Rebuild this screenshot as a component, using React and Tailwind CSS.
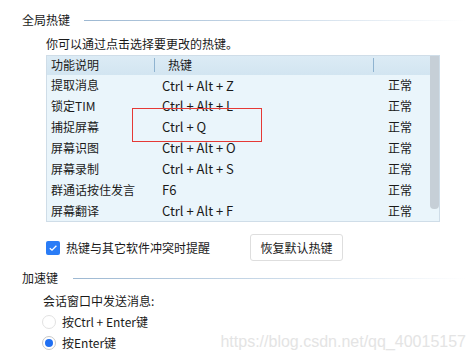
import React from "react";

const rows = [
  ["提取消息", "Ctrl + Alt + Z"],
  ["锁定TIM", "Ctrl + Alt + L"],
  ["捕捉屏幕", "Ctrl + Q"],
  ["屏幕识图", "Ctrl + Alt + O"],
  ["屏幕录制", "Ctrl + Alt + S"],
  ["群通话按住发言", "F6"],
  ["屏幕翻译", "Ctrl + Alt + F"],
];

const SectionTitle = ({ children, lineClass }) => (
  <div className="flex items-center h-[20px]">
    <span className="pl-[22px] text-[12px] leading-[20px] text-[#1a1a1a]">{children}</span>
    <div className={"h-px flex-1 mr-[10px] bg-gradient-to-r from-[#9db8d2] via-[#c9d9e8] to-white " + lineClass} />
  </div>
);

const Radio = ({ checked, children }) => (
  <div className="flex items-center h-[21px] pl-[42px]">
    <span
      className={
        "w-[14px] h-[14px] rounded-full border flex items-center justify-center bg-white " +
        (checked ? "border-[#c8c8c8]" : "border-[#e2e2e2]")
      }
    >
      {checked && <span className="w-[8px] h-[8px] rounded-full bg-[#1f6ff2]" />}
    </span>
    <span className="ml-[6px] text-[12px] text-[#1a1a1a]">{children}</span>
  </div>
);

export default function App() {
  return (
    <div
      className="relative w-[476px] h-[361px] bg-white overflow-hidden"
      style={{ fontFamily: '"Noto Sans CJK SC", "Noto Sans", sans-serif' }}
    >
      <div className="pt-[10px]">
        <SectionTitle lineClass="ml-[14px]">全局热键</SectionTitle>
      </div>

      <div className="pl-[46px] mt-[4px] h-[20px] text-[12px] leading-[20px] text-[#1a1a1a]">
        你可以通过点击选择要更改的热键。
      </div>

      <div className="ml-[46px] mt-[1px] w-[394px] h-[167px] flex border border-[#cfdde8] bg-[#eaf5fb]">
        <div className="flex-1 flex flex-col">
          <div className="flex h-[19px] items-center text-[12px] text-[#1a1a1a] bg-gradient-to-b from-[#dcebf5] to-[#d2e5f1]">
            <div className="w-[108px] pl-[4px] border-r border-[#8fb3d0] h-[14px] leading-[14px]">功能说明</div>
            <div className="w-[219px] pl-[13px] border-r border-[#8fb3d0] h-[14px] leading-[14px]">热键</div>
            <div className="flex-1" />
          </div>
          {rows.map(([name, key]) => (
            <div key={name} className="flex h-[21px] items-center text-[12px] text-[#1a1a1a]">
              <div className="w-[108px] pl-[4px]">{name}</div>
              <div className="w-[233px] pl-[7px] text-[13px]">{key}</div>
              <div className="flex-1">正常</div>
            </div>
          ))}
        </div>
        <div className="w-[9px] flex flex-col">
          <div className="h-[153px] bg-[#c6cfd7] rounded-b-[4px]" />
        </div>
      </div>

      <div className="flex items-center mt-[12px] h-[27px]">
        <div className="flex items-center pl-[46px] w-[250px]">
          <span className="w-[14px] h-[14px] rounded-[2px] bg-[#2a7cf6] flex items-center justify-center">
            <svg width="10" height="10" viewBox="0 0 10 10">
              <path d="M1.8 5.2 L4 7.2 L8.4 2.8" stroke="white" strokeWidth="1.3" fill="none" />
            </svg>
          </span>
          <span className="ml-[6px] text-[12px] text-[#1a1a1a]">热键与其它软件冲突时提醒</span>
        </div>
        <button className="w-[93px] h-[27px] border border-[#dedede] rounded-[3px] bg-white text-[12px] text-[#1a1a1a]">
          恢复默认热键
        </button>
      </div>

      <div className="mt-[7px]">
        <SectionTitle lineClass="ml-[15px]">加速键</SectionTitle>
      </div>
      <div className="pl-[43px] mt-[3px] h-[20px] text-[12px] leading-[20px] text-[#1a1a1a]">会话窗口中发送消息:</div>
      <Radio>按Ctrl + Enter键</Radio>
      <Radio checked>按Enter键</Radio>

      <div className="absolute left-[132px] top-[108px] w-[130px] h-[34px] border border-[#e53935]" />
      <div
        className="absolute right-[10px] top-[332px] text-[16px] leading-[20px] text-[#e4e4e4]"
        style={{ fontFamily: '"Liberation Sans", sans-serif' }}
      >
        https://blog.csdn.net/qq_40015157
      </div>
    </div>
  );
}
